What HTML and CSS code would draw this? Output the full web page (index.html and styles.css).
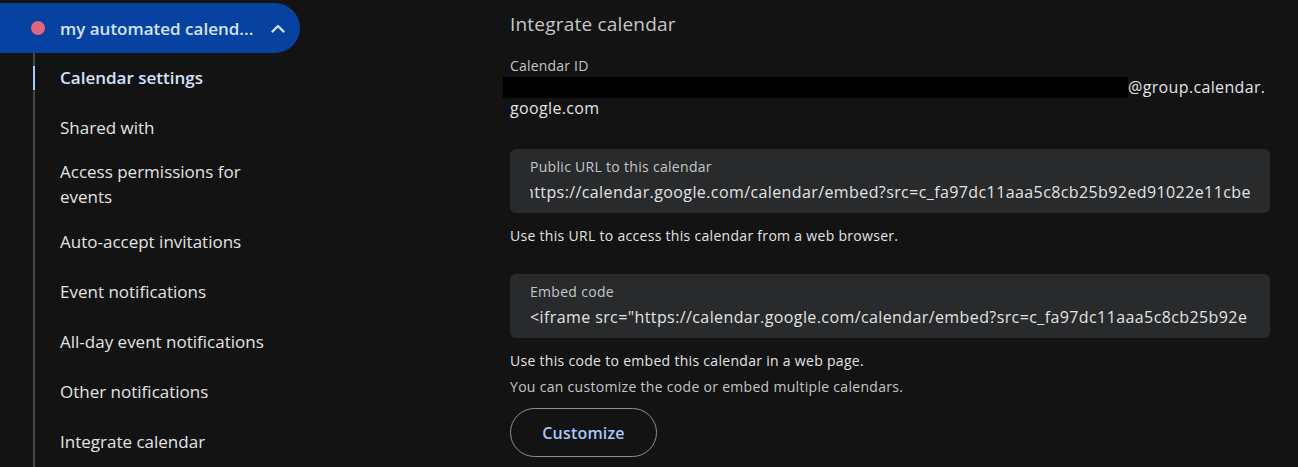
FILE: index.html
```html
<!DOCTYPE html>
<html>
<head>
<meta charset="utf-8">
<link rel="stylesheet" href="styles.css">
</head>
<body>
<div class="page">
  <nav class="sidebar">
    <div class="cal-pill">
      <span class="cal-dot"></span>
      <span class="cal-name">my automated calend...</span>
      <svg class="chevron" width="24" height="24" viewBox="0 0 24 24"><path d="M6.5 15.5 L12 10 L17.5 15.5" fill="none" stroke="#d3e3fd" stroke-width="2.4" stroke-linecap="round" stroke-linejoin="round"/></svg>
    </div>
    <ul class="nav-list">
      <li class="nav-item active">Calendar settings</li>
      <li class="nav-item">Shared with</li>
      <li class="nav-item">Access permissions for events</li>
      <li class="nav-item">Auto-accept invitations</li>
      <li class="nav-item">Event notifications</li>
      <li class="nav-item">All-day event notifications</li>
      <li class="nav-item">Other notifications</li>
      <li class="nav-item">Integrate calendar</li>
    </ul>
  </nav>
  <main class="content">
    <h2 class="section-title">Integrate calendar</h2>
    <div class="id-label">Calendar ID</div>
    <div class="id-value"><span class="redact"></span>@group.calendar.<wbr>google.com</div>
    <div class="field">
      <div class="field-label">Public URL to this calendar</div>
      <div class="field-value"><span class="scroll">https://calendar.google.com/calendar/embed?src=c_fa97dc11aaa5c8cb25b92ed91022e11cbe</span></div>
    </div>
    <p class="help">Use this URL to access this calendar from a web browser.</p>
    <div class="field field-embed">
      <div class="field-label">Embed code</div>
      <div class="field-value"><span>&lt;iframe src="https://calendar.google.com/calendar/embed?src=c_fa97dc11aaa5c8cb25b92e</span></div>
    </div>
    <p class="help help-first">Use this code to embed this calendar in a web page.</p>
    <p class="help help-second">You can customize the code or embed multiple calendars.</p>
    <button class="customize">Customize</button>
  </main>
</div>
</body>
</html>
```

FILE: styles.css
```css
* { box-sizing: border-box; }
html, body {
  margin: 0;
  padding: 0;
  background: #131314;
  color: #e3e3e3;
  font-family: "Open Sans", Roboto, sans-serif;
  height: 467px;
  overflow: hidden;
}
.page {
  display: flex;
  height: 467px;
}
.sidebar {
  width: 300px;
  flex: none;
  padding-top: 3px;
  display: flex;
  flex-direction: column;
}
.cal-pill {
  height: 50px;
  background: #0842a0;
  border-radius: 0 25px 25px 0;
  display: flex;
  align-items: center;
  padding-left: 31px;
  padding-right: 10px;
}
.cal-dot {
  width: 14px;
  height: 14px;
  border-radius: 50%;
  background: #e06681;
  flex: none;
}
.cal-name {
  margin-left: 15px;
  font-size: 17px;
  font-weight: 600;
  color: #d3e3fd;
  flex: 1;
  white-space: nowrap;
  overflow: hidden;
}
.chevron { flex: none; }
.nav-list {
  list-style: none;
  margin: 0 0 0 33px;
  padding: 0;
  border-left: 2px solid #444746;
  flex: 1;
}
.nav-item {
  position: relative;
  min-height: 50px;
  padding: 6px 30px 8px 25px;
  display: flex;
  align-items: center;
  font-size: 17px;
  line-height: 25px;
  color: #e3e3e3;
}
.nav-item.active {
  color: #d3e3fd;
  font-weight: 600;
}
.nav-item.active::before {
  content: "";
  position: absolute;
  left: -2px;
  top: 13px;
  width: 2px;
  height: 24px;
  background: #a8c7fa;
}
.content {
  margin-left: 210px;
  width: 760px;
  flex: none;
}
.section-title {
  margin: 10px 0 0;
  font-size: 19px;
  letter-spacing: 0.2px;
  font-weight: 400;
  line-height: 28px;
  color: #c4c7c5;
}
.id-label {
  margin-top: 18px;
  font-size: 14px;
  letter-spacing: 0.2px;
  line-height: 20px;
  color: #c4c7c5;
}
.id-value {
  font-size: 16px;
  letter-spacing: 0.35px;
  line-height: 21px;
  color: #e3e3e3;
  margin-top: 1px;
}
.redact {
  display: inline-block;
  vertical-align: top;
  width: 625px;
  height: 21px;
  margin-left: -7px;
  background: #000;
}
.field {
  margin-top: 30px;
  height: 64px;
  background: #282a2c;
  border-radius: 6px;
  padding: 9px 20px 0;
}
.field-label {
  font-size: 14px;
  letter-spacing: 0.3px;
  line-height: 18px;
  color: #c4c7c5;
}
.field-value {
  margin-top: 5px;
  font-size: 16px;
  letter-spacing: 0.4px;
  line-height: 22px;
  color: #e3e3e3;
  overflow: hidden;
  white-space: nowrap;
}
.field-value .scroll {
  display: inline-block;
  margin-left: -6px;
}
.help {
  margin: 13px 0 0;
  font-size: 14px;
  letter-spacing: 0.3px;
  line-height: 20px;
  color: #e3e3e3;
}
.field-embed { margin-top: 28px; }
.help-second {
  margin-top: 6px;
  color: #c4c7c5;
}
.customize {
  margin-top: 11px;
  width: 147px;
  height: 49px;
  border: 1px solid #8e918f;
  border-radius: 25px;
  background: transparent;
  color: #a8c7fa;
  font-family: "Open Sans", Roboto, sans-serif;
  font-size: 16px;
  font-weight: 600;
  letter-spacing: 0.2px;
}
```
